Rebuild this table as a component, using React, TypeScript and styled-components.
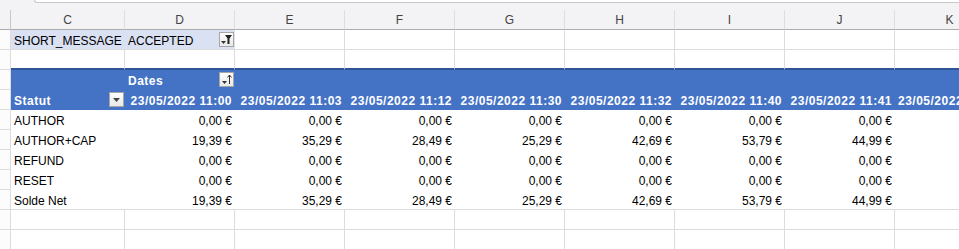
import React from 'react';
import styled, { createGlobalStyle } from 'styled-components';

const GRID = '#dcdcdc';
const HEAD_BG = '#f3f2f5';
const BLUE = '#4472c4';
const BLUE_DARK = '#2f5597';
const LAVENDER = '#d9e1f2';

const GlobalStyle = createGlobalStyle`
    html, body {
        margin: 0;
        padding: 0;
        background: #ffffff;
        overflow: hidden;
    }
    body {
        font-family: 'Liberation Sans', Arial, sans-serif;
        font-size: 12px;
        color: #000;
    }
`;

const Sheet = styled.div`
    width: 959px;
    height: 249px;
    overflow: hidden;
    background: #fff;
`;

const TopBar = styled.div`
    height: 10px;
    background: ${HEAD_BG};
    display: flex;
    padding-left: 34px;
`;

const FormulaEdge = styled.div`
    flex: 1;
    height: 2px;
    background: #fff;
    border: 1px solid #c8c8c8;
    border-top: none;
    border-right: none;
    border-bottom-left-radius: 4px;
`;

const Row = styled.div`
    display: flex;
    height: 20px;
    width: 1005px;
`;

const RowHead = styled.div<{ $corner?: boolean }>`
    width: 11px;
    flex: none;
    box-sizing: border-box;
    background: ${(p) => (p.$corner ? HEAD_BG : '#fcfcfc')};
    border-right: 1px solid ${(p) => (p.$corner ? '#c8c8c8' : GRID)};
    border-bottom: 1px solid ${(p) => (p.$corner ? '#ababab' : GRID)};
`;

const ColLetter = styled.div<{ $w: number }>`
    width: ${(p) => p.$w}px;
    flex: none;
    box-sizing: border-box;
    background: ${HEAD_BG};
    border-right: 1px solid #dedde1;
    border-bottom: 1px solid #ababab;
    display: flex;
    align-items: center;
    justify-content: center;
    color: #444;
    font-size: 12px;
`;

type Look = 'grid' | 'filter' | 'blue' | 'plain' | 'blueEdge' | 'last';

const Cell = styled.div<{ $w: number; $look: Look; $right?: boolean; $bold?: boolean }>`
    width: ${(p) => p.$w}px;
    flex: none;
    box-sizing: border-box;
    display: flex;
    align-items: flex-start;
    justify-content: ${(p) => (p.$right ? 'flex-end' : 'space-between')};
    padding: 3px 3px 0 3px;
    line-height: 16px;
    white-space: nowrap;
    overflow: visible;
    font-weight: ${(p) => (p.$bold ? 700 : 400)};
    letter-spacing: ${(p) => (p.$bold ? '0.5px' : '0')};
    color: ${(p) => (p.$look === 'blue' ? '#fff' : '#000')};
    background: ${(p) =>
        p.$look === 'filter' ? LAVENDER : p.$look === 'blue' ? BLUE : '#fff'};
    border-right: ${(p) => (p.$look === 'grid' || p.$look === 'blueEdge' ? `1px solid ${GRID}` : 'none')};
    border-bottom: ${(p) =>
        p.$look === 'blueEdge'
            ? `2px solid ${BLUE_DARK}`
            : p.$look === 'grid' || p.$look === 'filter' || p.$look === 'last'
            ? `1px solid ${GRID}`
            : 'none'};
`;

const DropButton = styled.div`
    width: 15px;
    height: 15px;
    flex: none;
    box-sizing: border-box;
    margin: -1px -2px 0 0;
    border: 1px solid #a6a6a6;
    background: linear-gradient(#fdfdfd, #e9e9e9);
    display: flex;
    align-items: center;
    justify-content: center;
`;

const ArrowDown = () => (
    <svg width="13" height="13" viewBox="0 0 13 13">
        <path d="M3 5 L10 5 L6.5 9 Z" fill="#444" />
    </svg>
);

const SortAsc = () => (
    <svg width="13" height="13" viewBox="0 0 13 13">
        <path d="M2 8 L7 8 L4.5 11 Z" fill="#333" />
        <path d="M9.5 2 L9.5 11" stroke="#333" strokeWidth="1" />
        <path d="M7.5 4.5 L9.5 2 L11.5 4.5" stroke="#333" strokeWidth="1" fill="none" />
    </svg>
);

const FilterOn = () => (
    <svg width="13" height="13" viewBox="0 0 13 13">
        <path d="M1 8 L6 8 L3.5 11 Z" fill="#333" />
        <path d="M5 2 L12 2 L9.5 5.5 L9.5 11 L7.5 11 L7.5 5.5 Z" fill="#222" />
    </svg>
);

const letters = ['C', 'D', 'E', 'F', 'G', 'H', 'I', 'J', 'K'];
const widths = [114, 110, 110, 110, 110, 110, 110, 110, 110];

const dates = [
    '23/05/2022 11:00',
    '23/05/2022 11:03',
    '23/05/2022 11:12',
    '23/05/2022 11:30',
    '23/05/2022 11:32',
    '23/05/2022 11:40',
    '23/05/2022 11:41',
    '23/05/2022 11:43',
];

const data: { label: string; values: string[] }[] = [
    { label: 'AUTHOR', values: ['0,00', '0,00', '0,00', '0,00', '0,00', '0,00', '0,00'] },
    { label: 'AUTHOR+CAP', values: ['19,39', '35,29', '28,49', '25,29', '42,69', '53,79', '44,99'] },
    { label: 'REFUND', values: ['0,00', '0,00', '0,00', '0,00', '0,00', '0,00', '0,00'] },
    { label: 'RESET', values: ['0,00', '0,00', '0,00', '0,00', '0,00', '0,00', '0,00'] },
    { label: 'Solde Net', values: ['19,39', '35,29', '28,49', '25,29', '42,69', '53,79', '44,99'] },
];

const EmptyRow = () => (
    <Row>
        <RowHead />
        {widths.map((w, i) => (
            <Cell key={i} $w={w} $look="grid" />
        ))}
    </Row>
);

export default function App() {
    return (
        <Sheet>
            <GlobalStyle />
            <TopBar>
                <FormulaEdge />
            </TopBar>

            <Row>
                <RowHead $corner />
                {letters.map((l, i) => (
                    <ColLetter key={l} $w={widths[i]}>
                        {l}
                    </ColLetter>
                ))}
            </Row>

            <Row>
                <RowHead />
                <Cell $w={widths[0]} $look="filter">SHORT_MESSAGE</Cell>
                <Cell $w={widths[1]} $look="filter">
                    <span>ACCEPTED</span>
                    <DropButton>
                        <FilterOn />
                    </DropButton>
                </Cell>
                {widths.slice(2).map((w, i) => (
                    <Cell key={i} $w={w} $look="grid" />
                ))}
            </Row>

            <Row>
                <RowHead />
                {widths.map((w, i) => (
                    <Cell key={i} $w={w} $look="blueEdge" />
                ))}
            </Row>

            <Row>
                <RowHead />
                <Cell $w={widths[0]} $look="blue" />
                <Cell $w={widths[1]} $look="blue" $bold>
                    <span>Dates</span>
                    <DropButton>
                        <SortAsc />
                    </DropButton>
                </Cell>
                {widths.slice(2).map((w, i) => (
                    <Cell key={i} $w={w} $look="blue" />
                ))}
            </Row>

            <Row>
                <RowHead />
                <Cell $w={widths[0]} $look="blue" $bold>
                    <span>Statut</span>
                    <DropButton>
                        <ArrowDown />
                    </DropButton>
                </Cell>
                {dates.map((d, i) => (
                    <Cell key={d} $w={widths[i + 1]} $look="blue" $bold $right={i < 7}>
                        {d}
                    </Cell>
                ))}
            </Row>

            {data.map((r, ri) => {
                const look: Look = ri === data.length - 1 ? 'last' : 'plain';
                return (
                    <Row key={r.label}>
                        <RowHead />
                        <Cell $w={widths[0]} $look={look}>{r.label}</Cell>
                        {r.values.map((v, i) => (
                            <Cell key={i} $w={widths[i + 1]} $look={look} $right>
                                {v} €
                            </Cell>
                        ))}
                        <Cell $w={widths[8]} $look={look} />
                    </Row>
                );
            })}

            <EmptyRow />
            <EmptyRow />
        </Sheet>
    );
}
